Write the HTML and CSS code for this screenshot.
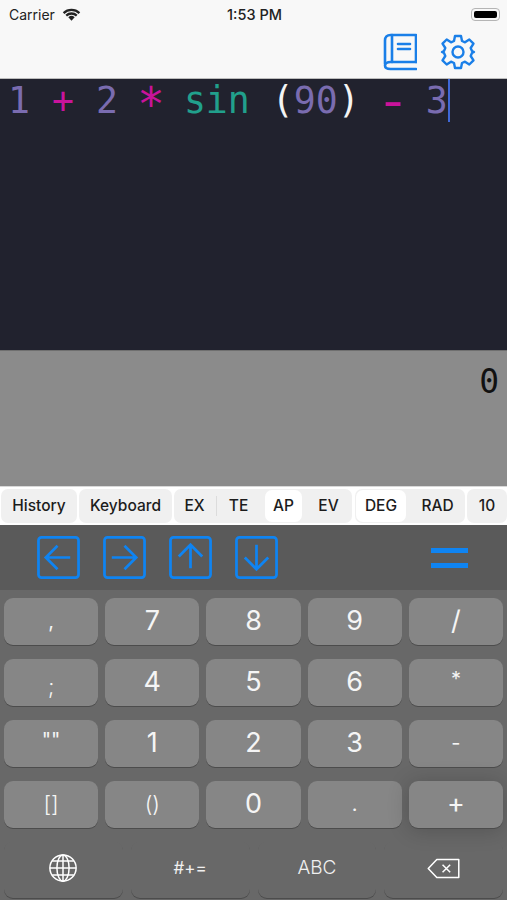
FILE: index.html
```html
<!DOCTYPE html>
<html lang="en">
  <head>
    <meta charset="UTF-8" />
    <meta name="viewport" content="width=device-width, initial-scale=1.0" />
    <title>Calculator</title>
    <link rel="stylesheet" href="styles.css">
  </head>
  <body>
    <div class="app">
      <header class="top">
        <div class="status">
          <div class="status-left">
            <span>Carrier</span>
            <svg class="wifi" viewBox="0 0 18 13" width="19" height="14">
              <path d="M9 13 6 9.600a4.400 4.400 0 0 1 6 0z" fill="#222"/>
              <path d="M1.500 5.600a11 11 0 0 1 15 0M4 8a7.400 7.400 0 0 1 10 0" fill="none" stroke="#222" stroke-width="2.200"/>
            </svg>
          </div>
          <span class="clock">1:53 PM</span>
          <div class="battery"><div class="battery-fill"></div></div>
        </div>
        <nav class="nav">
          <svg viewBox="0 0 34 38" width="34" height="38" fill="none" stroke="#1a7fe8" stroke-width="2.600" stroke-linejoin="round" stroke-linecap="round">
            <path d="M33 29V2H7.500C4 2 2 4 2 7.500V31"/>
            <path d="M9 2v27"/>
            <path d="M33 29H7.500C4 29 2 30.500 2 32.500S4 36 7.500 36H33"/>
            <path d="M15 11h12M15 16h12"/>
          </svg>
          <svg viewBox="0 0 36 36" width="36" height="36" fill="none" stroke="#1a7fe8" stroke-width="2.400" stroke-linejoin="round">
            <circle cx="18" cy="18" r="5.500"/>
            <path d="M15 2h6l1 5 3 1.300 4.300-2.800 4.200 4.200-2.800 4.300L32 17l2 1v0l-2 1-1.300 3 2.800 4.300-4.200 4.200-4.300-2.800-3 1.300-1 5h-6l-1-5-3-1.300-4.300 2.800-4.200-4.200L5.300 22 4 19l-2-1v0l2-1 1.300-3-2.800-4.300 4.200-4.200L11 8.300 14 7z"/>
          </svg>
        </nav>
      </header>

      <section class="editor">
        <div class="code"><span class="num">1</span> <span class="op">+</span> <span class="num">2</span> <span class="op op-star">*</span> <span class="fn">sin</span> <span class="paren">(</span><span class="num">90</span><span class="paren">)</span> <span class="op op-minus">-</span> <span class="num">3</span><span class="cursor"></span></div>
      </section>

      <section class="result">0</section>

      <div class="tabs">
        <div class="tab tab-history">History</div>
        <div class="tab tab-keyboard">Keyboard</div>
        <div class="segment seg-mode">
          <div class="seg seg-ex">EX</div>
          <div class="seg seg-rule">TE</div>
          <div class="seg active">AP</div>
          <div class="seg">EV</div>
        </div>
        <div class="segment seg-angle">
          <div class="seg active">DEG</div>
          <div class="seg seg-rad">RAD</div>
        </div>
        <div class="tab tab-base">10</div>
      </div>

      <div class="arrows">
        <div class="arrow-group">
          <svg class="arrow" viewBox="0 0 44 44"><rect x="1.500" y="1.500" width="41" height="41" rx="3"/><path d="M34 22H10M21 10 9 22l12 12"/></svg>
          <svg class="arrow" viewBox="0 0 44 44"><rect x="1.500" y="1.500" width="41" height="41" rx="3"/><path d="M9 22h24M22 10l12 12-12 12"/></svg>
          <svg class="arrow" viewBox="0 0 44 44"><rect x="1.500" y="1.500" width="41" height="41" rx="3"/><path d="M22 33V9M10 21 22 9l12 12"/></svg>
          <svg class="arrow" viewBox="0 0 44 44"><rect x="1.500" y="1.500" width="41" height="41" rx="3"/><path d="M22 9v24M10 22l12 12 12-12"/></svg>
        </div>
        <div class="equals"><span></span><span></span></div>
      </div>

      <div class="keyboard">
        <div class="keys">
          <div class="key small">,</div><div class="key">7</div><div class="key">8</div><div class="key">9</div><div class="key">/</div>
          <div class="key mid key-semi">;</div><div class="key">4</div><div class="key">5</div><div class="key">6</div><div class="key small key-high">*</div>
          <div class="key small key-high">""</div><div class="key">1</div><div class="key">2</div><div class="key">3</div><div class="key small">-</div>
          <div class="key mid">[]</div><div class="key mid">()</div><div class="key">0</div><div class="key small">.</div><div class="key key-plus">+</div>
        </div>
        <div class="bottom-row">
          <div class="sys-key">
            <svg viewBox="0 0 32 32" width="30" height="30" fill="none" stroke="#fff" stroke-width="1.600">
              <circle cx="16" cy="16" r="14"/>
              <ellipse cx="16" cy="16" rx="6.500" ry="14"/>
              <path d="M16 2v28M2 16h28M4.500 8.500h23M4.500 23.500h23"/>
            </svg>
          </div>
          <div class="sys-key sys-text">#+=</div>
          <div class="sys-key sys-text sys-abc">ABC</div>
          <div class="sys-key">
            <svg viewBox="0 0 36 22" width="35" height="21" fill="none" stroke="#fff" stroke-width="1.600" stroke-linejoin="round">
              <path d="M11 1.500h23v19H11L2 11z"/>
              <path d="M17 7l8 8M25 7l-8 8"/>
            </svg>
          </div>
        </div>
      </div>
    </div>
  </body>
</html>
```

FILE: styles.css
```css
* {
  margin: 0;
  padding: 0;
  box-sizing: border-box;
}

html, body {
  height: 100%;
  overflow: hidden;
}

body {
  font-family: Inter, "Liberation Sans", sans-serif;
  background: #686868;
}

.app {
  width: 507px;
  height: 900px;
  display: flex;
  flex-direction: column;
}

.top {
  height: 79px;
  background: #f8f8f8;
  border-bottom: 1px solid #bdbdbd;
}

.status {
  height: 28px;
  padding: 0 7px 0 9px;
  display: grid;
  grid-template-columns: 1fr auto 1fr;
  align-items: center;
  color: #222;
}

.status-left {
  display: flex;
  align-items: center;
  gap: 7px;
  font-size: 14px;
}

.clock {
  font-weight: 500;
  font-size: 14.500px;
}

.battery {
  width: 29px;
  height: 13px;
  justify-self: end;
  padding: 2px;
  border: 1px solid #b5b5b5;
  border-radius: 4px;
}

.battery-fill {
  height: 100%;
  background: #000;
  border-radius: 2px;
}

.nav {
  padding-right: 31px;
  display: flex;
  justify-content: flex-end;
  align-items: center;
  gap: 23px;
  height: 48px;
}

.editor {
  height: 271px;
  background: #21222e;
  padding-left: 8px;
}

.code {
  font-family: "DejaVu Sans Mono", monospace;
  font-size: 36.500px;
  line-height: 44px;
  height: 44px;
  white-space: pre;
  color: #fff;
}

.num { color: #7a6cb0; }
.op { color: #c9139b; }
.fn { color: #21a08c; }
.paren { color: #f4f4f4; }

.op-star {
  display: inline-block;
  transform: translateY(4px) scale(1.25);
}

.op-minus {
  display: inline-block;
  transform: scale(1.6, 1.3);
}

.cursor {
  display: inline-block;
  width: 2px;
  height: 43px;
  vertical-align: top;
  background: #3f68d8;
}

.result {
  height: 136px;
  background: #8b8b8b;
  border-top: 1px solid #6f6f6f;
  text-align: right;
  padding: 9px 8px 0 0;
  font-family: "DejaVu Sans Mono", monospace;
  font-size: 33px;
  line-height: 44px;
  color: #111;
}

.tabs {
  height: 39px;
  background: #fff;
  border-top: 1px solid #d8d8d8;
  padding: 2px 0 2px 1px;
  display: flex;
  gap: 2px;
  font-size: 15.500px;
  font-weight: 500;
  color: #1c1c1c;
}

.tab, .seg {
  display: flex;
  align-items: center;
  justify-content: center;
  padding-bottom: 1px;
}

.tab {
  background: #f0f0f0;
  border-radius: 7px;
}

.tab-history { width: 76px; }
.tab-keyboard { width: 93px; }
.tab-base { flex: 1; }

.segment {
  display: flex;
  background: #f0f0f0;
  border-radius: 7px;
  padding: 1px;
}

.seg-mode { width: 178px; }
.seg-angle { width: 110px; margin-left: 1px; }

.seg-mode .seg {
  flex: 0 0 45px;
}

.seg-mode .seg-ex {
  flex: 0 0 41px;
  padding-right: 2px;
}

.seg-rule {
  position: relative;
}

.seg-rule::before {
  content: "";
  position: absolute;
  left: 0;
  top: 6px;
  bottom: 6px;
  border-left: 1px solid #dcdcdc;
}

.seg.active {
  background: #fff;
  border-radius: 7px;
}

.seg-mode .seg.active {
  flex: 0 0 37px;
  margin: 0 4px;
}

.seg-angle .seg.active {
  flex: 0 0 50px;
}

.seg-rad {
  flex: 1;
  padding-left: 5px;
}

.arrows {
  height: 65px;
  background: #5a5a5a;
  padding: 11px 39px 0 37px;
  display: flex;
  justify-content: space-between;
}

.arrow-group {
  display: flex;
  gap: 23px;
}

.arrow {
  width: 43px;
  height: 43px;
  fill: none;
  stroke: #0f84f2;
  stroke-width: 2.800;
}

.equals {
  width: 37px;
  height: 20px;
  margin-top: 12px;
  display: flex;
  flex-direction: column;
  justify-content: space-between;
}

.equals span {
  height: 5px;
  background: #0f84f2;
}

.keyboard {
  flex: 1;
  background: #686868;
  padding: 8px 4px 0;
}

.keys {
  display: grid;
  grid-template-columns: repeat(5, 1fr);
  grid-auto-rows: 47px;
  row-gap: 14px;
  column-gap: 7px;
}

.key {
  display: flex;
  align-items: center;
  justify-content: center;
  padding-bottom: 2px;
  background: #868686;
  border-radius: 9px;
  box-shadow: 0 1px 0 #4c4c4c;
  color: #f5f5f5;
  font-size: 27px;
}

.key.small {
  font-size: 20px;
}

.key.mid {
  font-size: 22px;
  font-weight: 300;
}

.key-semi {
  padding: 6px 0 0;
}

.key-high {
  padding-bottom: 8px;
}

.key-plus {
  box-shadow: 0 1px 0 #4c4c4c, 0 2px 22px rgba(0, 0, 0, 0.2);
}

.bottom-row {
  margin-top: 13px;
  display: grid;
  grid-template-columns: repeat(4, 1fr);
  column-gap: 8px;
  height: 57px;
}

.sys-key {
  display: flex;
  align-items: center;
  justify-content: center;
  padding-bottom: 3px;
  border-radius: 9px;
  box-shadow: 0 1px 0 #4c4c4c;
  color: #f0f0f0;
}

.sys-text {
  font-size: 17px;
}

.sys-abc {
  font-size: 19px;
  font-weight: 300;
  padding-bottom: 5px;
}
```
